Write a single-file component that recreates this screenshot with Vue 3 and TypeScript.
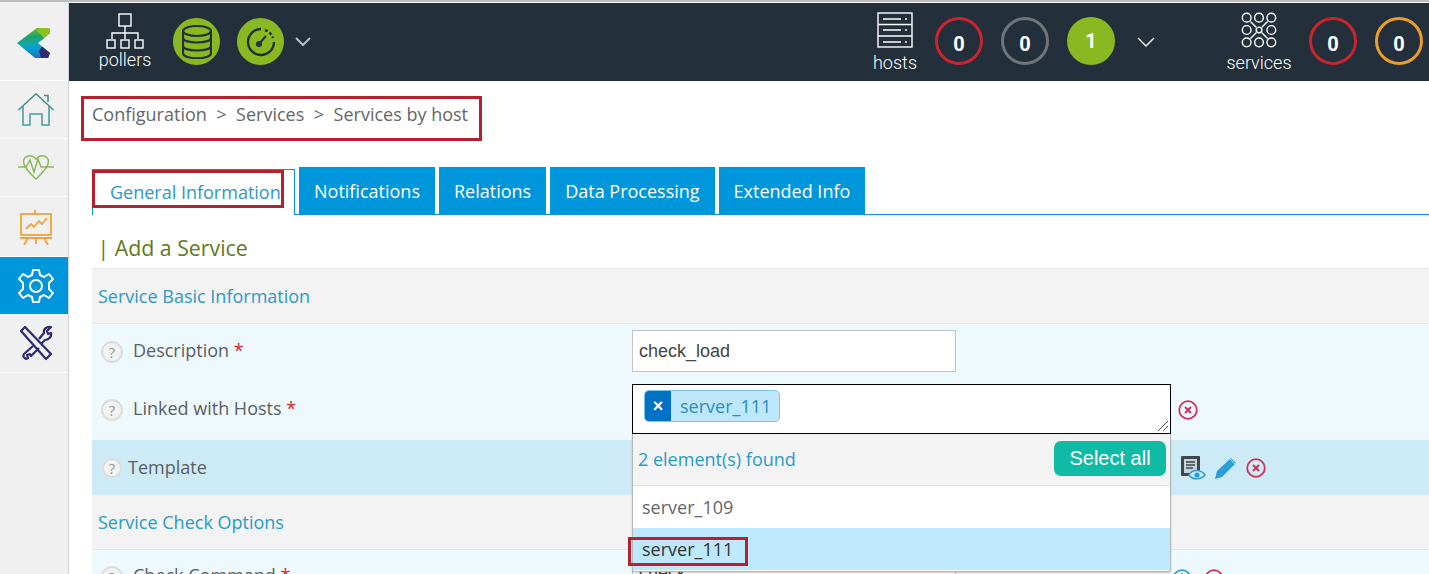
<script setup lang="ts">
const tabs: string[] = ['Notifications', 'Relations', 'Data Processing', 'Extended Info']
</script>

<template>
  <div class="page">
    <aside class="side">
      <div class="side-item logo">
        <svg width="34" height="32" viewBox="0 0 34 32">
          <defs>
            <linearGradient id="logoFill" x1="0.45" y1="0" x2="0.55" y2="1">
              <stop offset="0" stop-color="#6fba2c" />
              <stop offset="0.28" stop-color="#1fa36a" />
              <stop offset="0.5" stop-color="#12a6a6" />
              <stop offset="0.68" stop-color="#0b9bd7" />
              <stop offset="1" stop-color="#1b6fc0" />
            </linearGradient>
          </defs>
          <path d="M0 16 L20 1 H32 L33 3 V6 L25 13 L21 16 L25 19.5 L33 26 L31 31 H18 Z" fill="url(#logoFill)" />
          <path d="M22 1 H32 L33 3 V6 L27 11 L20 4 Z" fill="#8cc21f" />
          <path d="M25 19.5 L33 26 L31 31 H24 L22 24 Z" fill="#2d2a6e" />
        </svg>
      </div>
      <div class="side-item home">
        <svg width="36" height="33" viewBox="0 0 36 33" fill="none" stroke="#3f9d9f" stroke-width="1.5">
          <path d="M0.5 17 L18 0.8 L35.5 17" stroke="#3c8f86" />
          <path d="M26 2.5 H30 V9" stroke="#3c8f86" />
          <path d="M5 13 V32 H12 V21 H24 V32 H31 V13" />
        </svg>
      </div>
      <div class="side-item h2">
        <svg width="38" height="28" viewBox="0 0 38 28" fill="none" stroke="#8cb858" stroke-width="1.5">
          <path d="M1 13 H9 L13 6 L17 18 L21 5 L24 13 H37" />
          <path d="M7 10 C4 2 15 -1 19 5 C23 -1 34 2 31 10 C29 16 22 22 19 25 C16 22 9 16 7 10 Z" />
        </svg>
      </div>
      <div class="side-item h3">
        <svg width="34" height="36" viewBox="0 0 34 36" fill="none" stroke="#f0a33a" stroke-width="1.8">
          <path d="M16 1 V6" />
          <rect x="2" y="5" width="30" height="21" />
          <path d="M7 20 L12 15 L15 18 L20 12 L23 15 L28 9" />
          <path d="M1 29 H33 M9 29 L5 36 M17 29 V35 M25 29 L29 36" />
        </svg>
      </div>
      <div class="side-item active">
        <svg width="36" height="36" viewBox="0 0 36 36" fill="none" stroke="#fff" stroke-width="2">
          <circle cx="18" cy="18" r="6" />
          <path d="M15 2 H21 L22 7 L26 9 L31 6 L35 11 L31 15 L31 21 L35 25 L31 30 L26 27 L22 29 L21 34 H15 L14 29 L10 27 L5 30 L1 25 L5 21 L5 15 L1 11 L5 6 L10 9 L14 7 Z" stroke-linejoin="round" />
        </svg>
      </div>
      <div class="side-item tools-item">
        <svg width="34" height="36" viewBox="0 0 34 36" fill="none" stroke="#2e2a72" stroke-width="2.2" stroke-linejoin="round">
          <path d="M2 6 L6 2 L32 29 L27 34 Z" />
          <path d="M14 21 L5 29 C3 32 7 35 9 33 L8 30 L11 29 L12 31 L20 23" />
          <path d="M20 14 L25 8 C24 4 28 1 32 2 L28 6 L29 9 L32 8 C33 12 29 15 26 15 L22 19" />
        </svg>
      </div>
    </aside>

    <div class="main">
      <header class="top">
        <div class="stat-icon pollers">
          <svg width="40" height="36" viewBox="0 0 40 36" fill="none" stroke="#fff" stroke-width="1.4">
            <rect x="14" y="1" width="12" height="12" />
            <path d="M20 13 V20 M7 26 V20 H33 V26 M20 20 V26" />
            <rect x="2" y="27" width="8" height="8" />
            <rect x="16" y="27" width="8" height="8" />
            <rect x="30" y="27" width="8" height="8" />
          </svg>
          <span>pollers</span>
        </div>
        <div class="green-circle first">
          <svg width="30" height="34" viewBox="0 0 30 34" fill="none" stroke="#232f3b" stroke-width="2.2">
            <ellipse cx="15" cy="6" rx="14" ry="5" />
            <path d="M1 6 V28 C1 35 29 35 29 28 V6" />
            <path d="M1 13 C1 19 29 19 29 13 M1 21 C1 27 29 27 29 21" />
          </svg>
        </div>
        <div class="green-circle second">
          <svg width="32" height="32" viewBox="0 0 32 32" fill="none" stroke="#232f3b" stroke-width="2.4">
            <path d="M16 3 A13 13 0 1 0 29 16" />
            <path d="M20 4 A13 13 0 0 1 28 12" stroke-dasharray="3 2" />
            <path d="M12 20 L21 10" stroke-width="2" />
            <circle cx="14" cy="18" r="3" fill="#232f3b" stroke="none" />
          </svg>
        </div>
        <svg class="chev" width="18" height="10" viewBox="0 0 18 10" fill="none" stroke="#b9bfc4" stroke-width="2"><path d="M2 1 L9 8 L16 1" /></svg>

        <div class="spacer"></div>

        <div class="stat-icon hosts">
          <svg width="36" height="36" viewBox="0 0 36 36" fill="none" stroke="#fff" stroke-width="1.4">
            <rect x="1" y="1" width="34" height="34" />
            <path d="M1 12.5 H35 M1 24 H35" />
            <path d="M6 7 H24 M6 18 H24 M6 30 H24" />
            <path d="M29 6 V8 M29 17 V19 M29 29 V31" />
          </svg>
          <span>hosts</span>
        </div>
        <div class="count red">0</div>
        <div class="count grey">0</div>
        <div class="count ok">1</div>
        <svg class="chev2" width="20" height="11" viewBox="0 0 20 11" fill="none" stroke="#fff" stroke-width="1.4"><path d="M2 1 L10 9 L18 1" /></svg>
        <div class="stat-icon services">
          <svg width="36" height="36" viewBox="0 0 38 38" fill="none" stroke="#fff" stroke-width="1.5">
            <circle cx="6" cy="6" r="4.6" /><circle cx="19" cy="6" r="4.6" /><circle cx="32" cy="6" r="4.6" />
            <circle cx="6" cy="19" r="4.6" /><circle cx="19" cy="19" r="3" /><circle cx="32" cy="19" r="4.6" />
            <circle cx="6" cy="32" r="4.6" /><circle cx="19" cy="32" r="4.6" /><circle cx="32" cy="32" r="4.6" />
            <path d="M10 10 L16 16 M28 10 L22 16 M10 28 L16 22 M28 28 L22 22" />
          </svg>
          <span>services</span>
        </div>
        <div class="count red s1">0</div>
        <div class="count orange">0</div>
      </header>

      <div class="content">
        <div class="crumb">
          <span>Configuration</span><i>&gt;</i><span>Services</span><i>&gt;</i><span>Services by host</span>
        </div>

        <nav class="tabs">
          <div class="tab current">General Information</div>
          <div v-for="t in tabs" :key="t" class="tab">{{ t }}</div>
        </nav>

        <h2 class="title">| Add a Service</h2>

        <section class="form">
          <div class="section">Service Basic Information</div>
          <div class="row r1">
            <div class="label"><span class="help">?</span><span class="lbl">Description <b>*</b></span></div>
            <div class="field"><div class="input">check_load</div></div>
          </div>
          <div class="row r2">
            <div class="label"><span class="help">?</span><span class="lbl">Linked with Hosts <b>*</b></span></div>
            <div class="field">
              <div class="spacer-box narrow"></div>
              <svg width="20" height="20" viewBox="0 0 20 20" fill="none" stroke="#d12f5b" stroke-width="1.8">
                <circle cx="10" cy="10" r="8.8" /><path d="M7 7 L13 13 M13 7 L7 13" stroke-width="2" />
              </svg>
            </div>
          </div>
          <div class="row r3">
            <div class="label"><span class="help small">?</span><span class="lbl tight">Template</span></div>
            <div class="field">
              <div class="spacer-box"></div>
              <div class="tools">
                <svg width="26" height="26" viewBox="0 0 26 26">
                  <rect x="1" y="1" width="19" height="20" rx="1" fill="#3d474d" />
                  <rect x="4" y="4" width="13" height="14" fill="#c6d1d6" />
                  <path d="M6 7 H15 M6 10 H15 M6 13 H13" stroke="#3d474d" stroke-width="1.3" />
                  <path d="M9 20 C12 14 21 14 25 20 C21 25 12 25 9 20 Z" fill="#cdeaf7" stroke="#2b9fd8" stroke-width="1.6" />
                  <circle cx="17" cy="20" r="2.6" fill="#2b9fd8" />
                </svg>
                <svg width="24" height="24" viewBox="0 0 24 24">
                  <path d="M1 23 L3 15 L17 2 L22 7 L8 21 Z" fill="#2b9fd8" />
                  <path d="M16 3 L21 8" stroke="#cdeaf7" stroke-width="1" />
                </svg>
                <svg width="20" height="20" viewBox="0 0 20 20" fill="none" stroke="#d12f5b" stroke-width="1.8">
                  <circle cx="10" cy="10" r="8.8" /><path d="M7 7 L13 13 M13 7 L7 13" stroke-width="2" />
                </svg>
              </div>
            </div>
          </div>
          <div class="section">Service Check Options</div>
          <div class="row r4">
            <div class="label"><span class="help">?</span><span class="lbl">Check Command <b>*</b></span></div>
            <div class="field">
              <div class="input cmd">check</div>
              <div class="tools low">
                <svg width="20" height="20" viewBox="0 0 20 20" fill="none" stroke="#2b9fd8" stroke-width="1.8">
                  <circle cx="10" cy="10" r="8.8" /><path d="M10 4 V12 M6 8 H14" />
                </svg>
                <svg width="20" height="20" viewBox="0 0 20 20" fill="none" stroke="#d12f5b" stroke-width="1.8">
                  <circle cx="10" cy="10" r="8.8" />
                </svg>
              </div>
            </div>
          </div>
        </section>
      </div>
    </div>

    <!-- floating multiselect -->
    <div class="select">
      <div class="textarea">
        <div class="chip"><span class="chip-x">×</span><span class="chip-t">server_111</span></div>
        <svg class="grip" width="12" height="12" viewBox="0 0 12 12" stroke="#555" stroke-width="1"><path d="M1 11 L11 1 M6 11 L11 6" /></svg>
      </div>
      <div class="drop">
        <div class="drop-head"><span>2 element(s) found</span><button class="all" type="button">Select all</button></div>
        <div class="opt">server_109</div>
        <div class="opt sel">server_111</div>
      </div>
    </div>

    <!-- red annotation frames -->
    <div class="mark m1"></div>
    <div class="mark m2"></div>
    <div class="mark m3"></div>
  </div>
</template>

<style>
html, body { margin: 0; height: 574px; overflow: hidden; background: #fff; }
</style>

<style scoped>
.page { position: relative; display: flex; width: 1429px; height: 574px; overflow: hidden; font-family: "Open Sans", sans-serif; color: #5a5f63; }
.side { width: 68px; flex: none; padding-top: 3px; background: linear-gradient(#b9bcbe 0 2px, #f0f0f0 2px); border-right: 1px solid #cfd2d4; }
.side-item { height: 57px; display: flex; align-items: center; justify-content: center; border-bottom: 1px solid #fff; box-sizing: border-box; padding-left: 4px; }
.logo { height: 78px; padding: 2px 0 0 0; }
.home { height: 58px; }
.h2 { height: 58px; }
.h3 { height: 60px; }
.active { background: #0096db; border-bottom: 0; }
.tools-item { height: 59px; }
.main { flex: 1; min-width: 0; padding-top: 3px; background: linear-gradient(#b9bcbe 0 2px, #fff 2px); }
.top { height: 78px; background: #232f3b; display: flex; align-items: center; color: #fff; }
.stat-icon { display: flex; flex-direction: column; align-items: center; font-size: 18px; line-height: 20px; font-family: Roboto, sans-serif; font-weight: 300; margin-top: 1px; }
.stat-icon span { margin-top: 5px; }
.pollers { width: 60px; margin: 0 0 0 26px; padding-bottom: 1px; }
.pollers span { margin-top: 1px; }
.green-circle { width: 47px; height: 47px; border-radius: 50%; background: #88b920; display: flex; align-items: center; justify-content: center; flex: none; }
.first { margin-left: 18px; margin-top: -1px; }
.second { margin-left: 17px; margin-top: -1px; }
.chev { margin-left: 10px; margin-top: -1px; }
.spacer { flex: 1; }
.hosts { width: 46px; }
.count { width: 48px; height: 48px; box-sizing: border-box; border-radius: 50%; border: 3px solid #c9252f; display: flex; align-items: center; justify-content: center; font-family: Roboto, sans-serif; font-weight: 700; font-size: 20px; padding-top: 6px; flex: none; margin: -2px 0 0 18px; }
.hosts + .count { margin-left: 17px; }
.grey { border-color: #6f7479; }
.ok { border: 0; background: #88b920; padding-top: 0; }
.chev2 { margin-left: 21px; margin-right: 65px; }
.services { width: 76px; }
.s1 { margin-left: 12px; }
.orange { border-color: #ec9c2a; margin-right: 6px; }
.content { padding: 0 0 0 23px; }
.crumb { height: 86px; box-sizing: border-box; padding-top: 20px; font-size: 18px; line-height: 26px; color: #666; display: flex; }
.crumb i { font-style: normal; margin: 0 9.5px; }
.tabs { display: flex; gap: 4px; height: 48px; border-bottom: 1px solid #0096db; box-sizing: border-box; align-items: flex-end; }
.tab { height: 47px; padding: 0 15px; background: #0096db; color: #fff; font-size: 18px; line-height: 48px; box-sizing: border-box; }
.current { height: 46px; margin-bottom: -1px; width: 203px; background: #fff; color: #2a9ac9; border: 1px solid #0096db; border-bottom: 0; padding: 0 0 0 17px; line-height: 44px; }
.title { margin: 0; height: 54px; box-sizing: border-box; padding: 18px 0 0 5.5px; font-size: 21.3px; line-height: 30px; font-weight: 400; color: #5f7a1e; border-bottom: 1px solid #e6e6e6; }
.form { background: #eef9fe; }
.section { height: 55px; background: #f3f3f3; border-bottom: 1px solid #e1e7ea; box-sizing: border-box; padding: 0 0 0 6px; line-height: 54px; font-size: 18px; color: #2a9ac9; }
.row { display: flex; align-items: center; }
.r1 { height: 56px; }
.r2 { height: 60px; }
.r3 { height: 55px; background: #cdeaf7; }
.r4 { height: 40px; align-items: flex-start; }
.label { width: 540px; flex: none; display: flex; align-items: center; font-size: 18px; padding-left: 9px; box-sizing: border-box; }
.help { width: 22px; height: 22px; box-sizing: border-box; border-radius: 50%; background: #f2f2f2; border: 2px solid #dcdcdc; color: #9a9a9a; font-size: 15px; line-height: 18px; text-align: center; flex: none; }
.lbl { margin: 0 0 4px 10px; }
.lbl b { font-weight: 400; color: #d21f2f; }
.small { width: 20px; height: 20px; line-height: 16px; margin: 0 -4px 0 1px; }
.tight { margin-bottom: 2px; }
.field { display: flex; align-items: center; flex: 1; }
.input { width: 324px; height: 42px; box-sizing: border-box; background: #fff; border: 1px solid #bfc4c8; font-family: "Liberation Sans", sans-serif; font-size: 18px; color: #444; line-height: 40px; padding-left: 6px; }
.r1 .input { margin-top: -2px; }
.cmd { margin-top: 2px; }
.r4 .label { padding-top: 13px; }
.spacer-box { width: 548px; flex: none; }
.narrow { width: 546px; }
.tools { display: flex; align-items: center; gap: 8px; margin-top: 1px; }
.low { margin: 14px 0 0 216px; gap: 12px; }
.select { position: absolute; left: 632px; top: 384px; width: 539px; }
.textarea { position: relative; height: 50px; box-sizing: border-box; background: #fff; border: 1px solid #000; padding: 5px 0 0 11px; }
.chip { display: inline-flex; height: 32px; border: 1px solid #7cc5e6; border-radius: 5px; background: #bee7fb; overflow: hidden; box-sizing: border-box; }
.chip-x { width: 26px; background: #0072c6; color: #fff; font-weight: 700; font-size: 18px; line-height: 30px; text-align: center; font-family: "Liberation Sans", sans-serif; }
.chip-t { padding: 0 8px 0 9px; font-size: 18px; line-height: 30px; color: #2a8fc0; }
.grip { position: absolute; right: 1px; bottom: 1px; }
.drop { box-sizing: border-box; border: 1px solid #b5b8ba; border-top: 0; background: #fff; height: 138px; border-radius: 0 0 3px 3px; box-shadow: 0 1px 2px rgba(0,0,0,.2); }
.drop-head { height: 52px; box-sizing: border-box; background: #f3f3f3; border-bottom: 1px solid #e3e3e3; display: flex; align-items: center; justify-content: space-between; padding: 0 4px 2px 5px; font-size: 18px; color: #2a9ac9; }
.all { width: 112px; height: 35px; border: 0; border-radius: 7px; background: #10bba6; color: #fff; font-family: "Liberation Sans", sans-serif; font-size: 20px; padding: 0; }
.opt { height: 42px; box-sizing: border-box; padding-left: 9px; font-size: 18px; line-height: 43px; color: #666; }
.sel { background: #bee9fc; color: #333; }
.mark { position: absolute; border: 3px solid #b9202f; box-sizing: border-box; pointer-events: none; }
.m1 { left: 81px; top: 96px; width: 401px; height: 45px; }
.m2 { left: 92px; top: 170px; width: 192px; height: 38px; }
.m3 { left: 628px; top: 537px; width: 120px; height: 29px; }
</style>
